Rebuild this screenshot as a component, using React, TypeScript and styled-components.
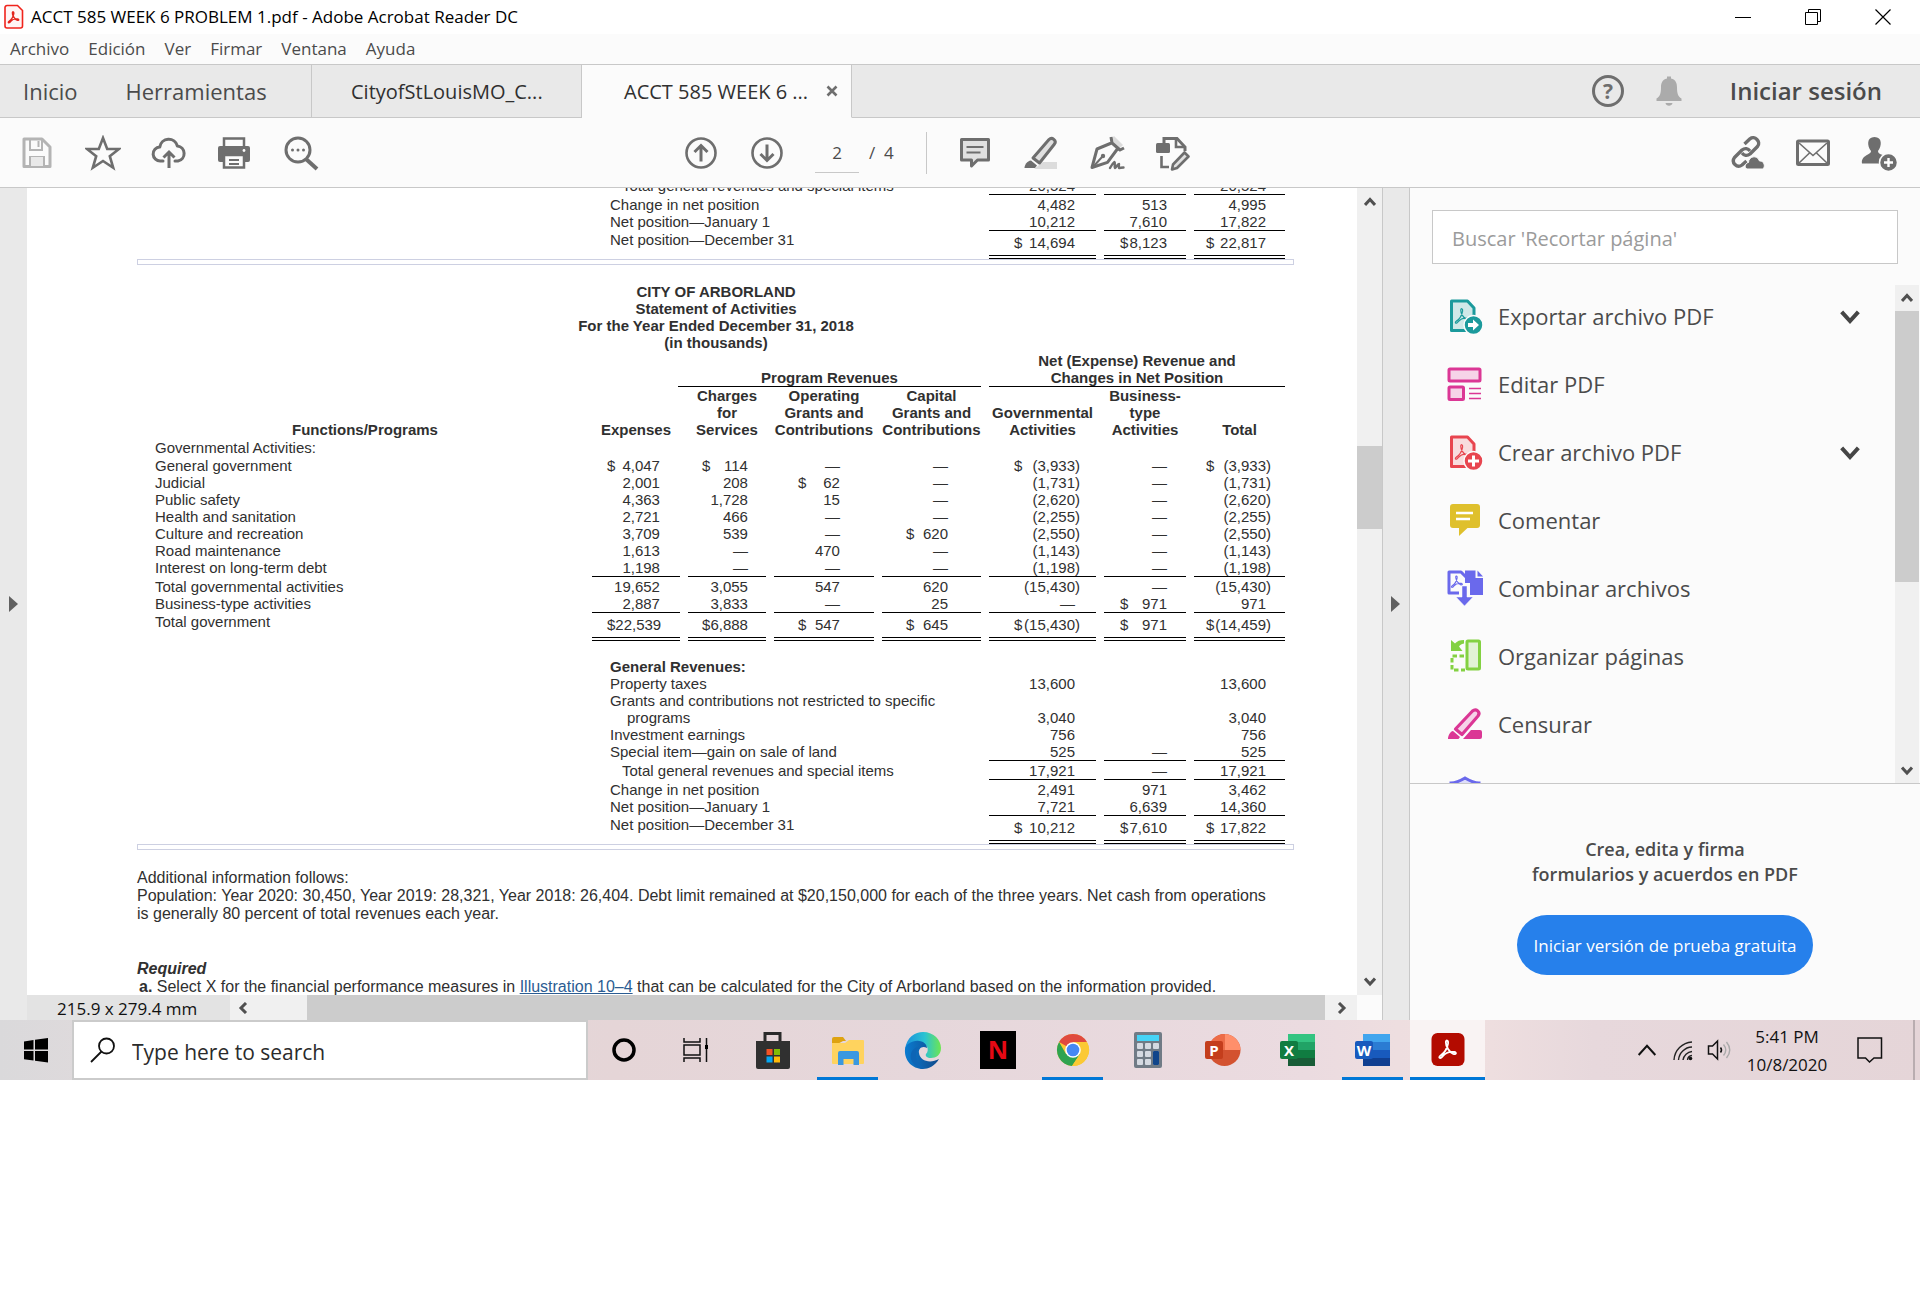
import React from "react";
import styled, { createGlobalStyle, css } from "styled-components";

const ui = `"Open Sans", "Noto Sans", sans-serif`;
const doc = `"Liberation Sans", Arial, sans-serif`;
const c = {
  bar: "#e9e9e9",
  surface: "#fbfbfb",
  line: "#c8c8c8",
  track: "#f0f0f0",
  thumb: "#cccccc",
  icon: "#6e6e6e",
  text: "#4b4b4b",
  ink: "#303030",
  accent: "#0078d7",
};

const Global = createGlobalStyle`
  *, *::before, *::after { box-sizing: border-box; }
  body { margin: 0; background: #fff; font-family: ${ui}; color: ${c.text}; }
  button, input { font: inherit; color: inherit; }
  button { border: 0; padding: 0; background: none; cursor: pointer; }
  svg { display: block; flex: none; }
`;

/* ---------- window chrome ---------- */

const TitleBar = styled.header`
  display: flex;
  align-items: center;
  height: 34px;
  padding: 0 2px 0 4px;
  background: #fff;
  color: #000;
`;
const WindowTitle = styled.h1`
  flex: 1;
  margin: 0 0 0 7px;
  font-size: 17px;
  line-height: 34px;
  font-weight: 400;
`;
const WindowButton = styled.button`
  display: grid;
  place-items: center;
  width: 70px;
  height: 34px;
`;
const MenuBar = styled.nav`
  display: flex;
  gap: 19px;
  height: 31px;
  padding-left: 10px;
  background: ${c.surface};
  border-bottom: 1px solid ${c.line};
`;
const MenuItem = styled.button`
  font-size: 17px;
  line-height: 30px;
`;
const TabBar = styled.nav`
  display: flex;
  height: 53px;
  background: ${c.bar};
`;
const HomeTabs = styled.div`
  display: flex;
  gap: 48px;
  width: 312px;
  padding-left: 23px;
  border-right: 1px solid ${c.line};
  border-bottom: 1px solid ${c.line};
`;
const HomeTab = styled.button`
  font-size: 22px;
`;
const FileTab = styled.div<{ $active?: boolean }>`
  display: flex;
  align-items: center;
  width: 270px;
  padding-left: ${(p) => (p.$active ? 42 : 39)}px;
  color: ${c.ink};
  background: ${(p) => (p.$active ? c.surface : "transparent")};
  border-right: 1px solid ${c.line};
  border-bottom: 1px solid ${(p) => (p.$active ? c.surface : c.line)};
`;
const FileTabLabel = styled.button`
  font-size: 20px;
  white-space: nowrap;
`;
const FileTabClose = styled.button`
  margin-left: auto;
  margin-right: 13px;
`;
const Account = styled.div`
  display: flex;
  flex: 1;
  align-items: center;
  justify-content: flex-end;
  gap: 32px;
  padding-right: 38px;
  border-bottom: 1px solid ${c.line};
`;
const SignIn = styled.button`
  margin-left: 16px;
  font-size: 24px;
  line-height: 32px;
  font-weight: 600;
`;

/* ---------- toolbar ---------- */

const ToolBar = styled.div`
  display: flex;
  align-items: center;
  height: 70px;
  padding: 0 8px 0 4px;
  background: ${c.surface};
  border-bottom: 1px solid ${c.line};
`;
const ToolGroup = styled.div<{ $side?: "left" | "right" }>`
  display: flex;
  align-items: center;
  ${(p) => p.$side && css`flex: 1 0 0;`}
  ${(p) => p.$side === "right" && css`justify-content: flex-end;`}
  ${(p) => !p.$side && css`margin-right: 42px;`}
`;
const ToolButton = styled.button`
  display: grid;
  place-items: center;
  width: 66px;
  height: 50px;
`;
const PageField = styled.input`
  width: 44px;
  height: 40px;
  margin-left: 15px;
  padding: 0;
  border: 0;
  border-bottom: 1px solid ${c.line};
  background: transparent;
  text-align: center;
  font-size: 17px;
`;
const PageCount = styled.span`
  width: 57px;
  margin-left: 10px;
  font-size: 17px;
  white-space: pre;
`;
const ToolDivider = styled.span`
  width: 1px;
  height: 42px;
  margin-right: 15px;
  background: ${c.line};
`;

/* ---------- workspace ---------- */

const Workspace = styled.main`
  display: flex;
  height: 832px;
`;
const Strip = styled.button`
  width: 27px;
  display: grid;
  place-items: center;
  background: ${c.bar};
`;
const RightStrip = styled(Strip)`
  width: 28px;
  border-left: 1px solid ${c.line};
  border-right: 1px solid ${c.line};
`;
const DocColumn = styled.section`
  flex: 1;
  min-width: 0;
  display: flex;
  flex-direction: column;
`;
const Viewport = styled.div`
  flex: 1;
  min-height: 0;
  overflow: hidden;
  background: #fff;
`;
const Sheet = styled.article`
  margin-top: -12px;
  padding: 0 63px 0 110px;
  font-family: ${doc};
  color: ${c.ink};
`;
const BottomBar = styled.div`
  display: flex;
  height: 25px;
  background: ${c.track};
`;
const PageSize = styled.span`
  width: 203px;
  padding-left: 30px;
  background: #e3e3e3;
  color: #111;
  font-size: 17px;
  line-height: 27px;
`;
const Scroll = styled.div<{ $vertical?: boolean; $size: number }>`
  display: flex;
  flex-direction: ${(p) => (p.$vertical ? "column" : "row")};
  ${(p) => (p.$vertical ? css`width: ${p.$size}px;` : css`flex: 1;`)}
  background: ${c.track};
`;
const ScrollArrow = styled.button<{ $length: number; $vertical?: boolean }>`
  display: grid;
  place-items: center;
  flex: 0 0 ${(p) => p.$length}px;
`;
const Track = styled.span<{ $grow: number }>`
  flex: ${(p) => p.$grow} 0 0;
`;
const Thumb = styled(Track)`
  background: ${c.thumb};
`;
const Corner = styled.div`
  height: 25px;
  background: ${c.surface};
`;

/* ---------- document ---------- */

const Statement = styled.table`
  width: calc(100% - 11px);
  margin-left: 10px;
  margin-right: 1px;
  table-layout: fixed;
  border-collapse: separate;
  border-spacing: 8px 0;
  font-size: 15px;
  line-height: 17px;
`;
const Caption = styled.caption`
  padding: 0 8px 1px 0;
  font-weight: 700;
`;
const Head = styled.th`
  padding: 0 0 1px;
  vertical-align: bottom;
  white-space: nowrap;
  &:first-child { padding-right: 9px; }
`;
const SpanHead = styled.th`
  padding: 0;
  vertical-align: bottom;
`;
const SpanRule = styled.div<{ $overhang?: boolean }>`
  border-bottom: 1px solid #000;
  margin-left: ${(p) => (p.$overhang ? -10 : 0)}px;
`;
const Label = styled.td<{ $indent?: number; $lead?: boolean; $tall?: boolean; $bold?: boolean }>`
  padding: ${(p) => (p.$lead ? 1 : 0)}px 0 ${(p) => (p.$tall ? 1 : 0)}px ${(p) => p.$indent ?? 0}px;
  vertical-align: top;
  font-weight: ${(p) => (p.$bold ? 700 : 400)};
`;
const AmountCell = styled.td<{ $lead?: boolean; $rule?: Rule }>`
  padding: ${(p) => (p.$lead ? 1 : 0)}px 0 0;
  vertical-align: top;
  ${(p) => p.$rule === "single" && css`border-bottom: 1px solid #000;`}
  ${(p) =>
    p.$rule === "double" &&
    css`
      padding-top: 3px;
      &::after {
        content: "";
        display: block;
        height: 4px;
        margin-top: 4px;
        border: solid #000;
        border-width: 1px 0;
      }
    `}
`;
const Amount = styled.div<{ $left: number; $right: number }>`
  display: flex;
  justify-content: space-between;
  height: 17px;
  padding: 0 ${(p) => p.$right}px 0 ${(p) => p.$left}px;
  white-space: nowrap;
`;
const Gap = styled.td`
  height: 17px;
  padding: 0;
`;
const Divider = styled.div`
  height: 6px;
  margin-bottom: 18px;
  border: 1px solid #cdd0e2;
`;
const Notes = styled.p`
  margin: 0 0 37px;
  padding-top: 1px;
  font-size: 16px;
  line-height: 18px;
`;
const Required = styled.h2`
  margin: 0;
  font-size: 16px;
  line-height: 18px;
  font-style: italic;
`;
const Task = styled.p`
  margin: 0;
  padding-left: 2px;
  font-size: 16px;
  line-height: 18px;
  a { color: #2b5c92; }
`;

type Rule = "single" | "double";
const columns = [
  { width: 88, left: 15, right: 20, hang: 0 },
  { width: 78, left: 14, right: 18, hang: 0 },
  { width: 100, left: 24, right: 34, hang: 0 },
  { width: 99, left: 24, right: 33, hang: 0 },
  { width: 107, left: 25, right: 21, hang: 5 },
  { width: 82, left: 16, right: 19, hang: 0 },
  { width: 91, left: 12, right: 19, hang: 5 },
];

interface Line {
  label: string;
  values: string[];
  indent?: number;
  lead?: boolean;
  tall?: boolean;
  bold?: boolean;
  rule?: Rule;
}

const programs: Line[] = [
  { label: "Governmental Activities:", values: ["", "", "", "", "", "", ""], tall: true },
  { label: "General government", values: ["$4,047", "$114", "—", "—", "$(3,933)", "—", "$(3,933)"] },
  { label: "Judicial", values: ["2,001", "208", "$62", "—", "(1,731)", "—", "(1,731)"] },
  { label: "Public safety", values: ["4,363", "1,728", "15", "—", "(2,620)", "—", "(2,620)"] },
  { label: "Health and sanitation", values: ["2,721", "466", "—", "—", "(2,255)", "—", "(2,255)"] },
  { label: "Culture and recreation", values: ["3,709", "539", "—", "$620", "(2,550)", "—", "(2,550)"] },
  { label: "Road maintenance", values: ["1,613", "—", "470", "—", "(1,143)", "—", "(1,143)"] },
  { label: "Interest on long-term debt", values: ["1,198", "—", "—", "—", "(1,198)", "—", "(1,198)"], rule: "single" },
  { label: "Total governmental activities", values: ["19,652", "3,055", "547", "620", "(15,430)", "—", "(15,430)"], lead: true },
  { label: "Business-type activities", values: ["2,887", "3,833", "—", "25", "—", "$971", "971"], rule: "single" },
  { label: "Total government", values: ["$22,539", "$6,888", "$547", "$645", "$(15,430)", "$971", "$(14,459)"], rule: "double" },
];
const revenues: Line[] = [
  { label: "General Revenues:", values: ["", "", ""], bold: true },
  { label: "Property taxes", values: ["13,600", "", "13,600"] },
  { label: "Grants and contributions not restricted to specific", values: ["", "", ""] },
  { label: "programs", values: ["3,040", "", "3,040"], indent: 17 },
  { label: "Investment earnings", values: ["756", "", "756"] },
  { label: "Special item—gain on sale of land", values: ["525", "—", "525"], rule: "single" },
  { label: "Total general revenues and special items", values: ["17,921", "—", "17,921"], indent: 12, lead: true, rule: "single" },
  { label: "Change in net position", values: ["2,491", "971", "3,462"], lead: true },
  { label: "Net position—January 1", values: ["7,721", "6,639", "14,360"], rule: "single" },
  { label: "Net position—December 31", values: ["$10,212", "$7,610", "$17,822"], rule: "double" },
];
const priorClosing: Line[] = [
  { label: "Total general revenues and special items", values: ["20,524", "—", "20,524"], indent: 12, lead: true, rule: "single" },
  { label: "Change in net position", values: ["4,482", "513", "4,995"], lead: true },
  { label: "Net position—January 1", values: ["10,212", "7,610", "17,822"], rule: "single" },
  { label: "Net position—December 31", values: ["$14,694", "$8,123", "$22,817"], rule: "double" },
];

const Cols = () => (
  <colgroup>
    <col />
    {columns.map((col, i) => (
      <col key={i} style={{ width: col.width }} />
    ))}
  </colgroup>
);

function Values({ line, from }: { line: Line; from: number }) {
  return (
    <>
      {line.values.map((value, i) => {
        const col = columns[from + i];
        const dollar = value.startsWith("$");
        const right = col.right - (value.includes("(") ? col.hang : 0);
        return (
          <AmountCell key={i} $lead={line.lead} $rule={line.rule}>
            <Amount $left={col.left} $right={right}>
              <span>{dollar ? "$" : ""}</span>
              <span>{dollar ? value.slice(1) : value}</span>
            </Amount>
          </AmountCell>
        );
      })}
    </>
  );
}

const RevenueRow = ({ line }: { line: Line }) => (
  <tr>
    <td />
    <Label colSpan={4} $indent={18 + (line.indent ?? 0)} $lead={line.lead} $bold={line.bold}>
      {line.label}
    </Label>
    <Values line={line} from={4} />
  </tr>
);

/* ---------- tools panel ---------- */

const Panel = styled.aside`
  display: flex;
  flex-direction: column;
  width: 510px;
  background: ${c.surface};
`;
const Search = styled.input`
  height: 54px;
  margin: 22px 22px 21px;
  padding: 2px 19px 0;
  border: 1px solid ${c.line};
  background: #fff;
  font-size: 20px;
  &::placeholder { color: #9b9b9b; opacity: 1; }
`;
const ToolsArea = styled.div`
  display: flex;
  flex: 1;
  min-height: 0;
  padding: 0 1px 0 22px;
  border-bottom: 1px solid ${c.line};
`;
const ToolList = styled.ul`
  display: flex;
  flex: 1;
  flex-direction: column;
  gap: 6px;
  overflow: hidden;
  margin: 0 23px 0 0;
  padding: 0;
  list-style: none;
`;
const Tool = styled.button`
  display: flex;
  align-items: center;
  width: 100%;
  height: 62px;
  padding: 0 12px 0 15px;
  text-align: left;
  font-size: 22px;
`;
const ToolName = styled.span`
  flex: 1;
  margin-left: 15px;
`;
const Promo = styled.div`
  display: flex;
  flex-direction: column;
  align-items: center;
  height: 236px;
  padding-top: 53px;
`;
const PromoText = styled.p`
  margin: 0 0 28px;
  font-size: 18px;
  line-height: 25px;
  font-weight: 600;
  text-align: center;
`;
const PromoButton = styled.button`
  height: 60px;
  padding: 0 16px;
  border-radius: 30px;
  background: #2680eb;
  color: #fff;
  font-size: 17px;
`;

/* ---------- taskbar ---------- */

const TaskBar = styled.footer`
  display: flex;
  height: 60px;
  color: #111;
  background: linear-gradient(90deg, #dad9db 0, #dfdadc 5%, #e5d5d7 32%, #e6d7db 48%, #ebdbe0 68%, #f0e0e0 76%, #e7d8dc 83%, #e5d5d8 100%);
`;
const TaskButton = styled.button<{ $width: number }>`
  display: grid;
  place-items: center;
  width: ${(p) => p.$width}px;
`;
const TaskSearch = styled.label`
  display: flex;
  align-items: center;
  width: 516px;
  padding-left: 16px;
  border: 2px solid #cbcbcb;
  background: #fff;
`;
const TaskSearchField = styled.input`
  flex: 1;
  min-width: 0;
  margin-left: 16px;
  padding: 3px 0 0;
  border: 0;
  background: none;
  font-size: 21px;
  &::placeholder { color: #2b2b2b; opacity: 1; }
`;
const Apps = styled.div`
  display: flex;
  margin-left: 3px;
`;
const AppButton = styled.button<{ $state?: "open" | "active" }>`
  display: flex;
  flex-direction: column;
  align-items: center;
  justify-content: space-between;
  width: 75px;
  padding-top: 11px;
  ${(p) => p.$state === "active" && css`background: #f9f3f3;`}
  &::after {
    content: "";
    width: ${(p) => (p.$state === "active" ? "100%" : "61px")};
    height: 3px;
    background: ${(p) => (p.$state ? c.accent : "transparent")};
  }
`;
const Tray = styled.div`
  display: flex;
  margin-left: auto;
`;
const Clock = styled.time`
  width: 100px;
  padding-top: 3px;
  font-size: 17px;
  line-height: 28px;
  text-align: center;
`;
const ShowDesktop = styled.button`
  width: 7px;
  margin-left: 10px;
  border-left: 2px solid #b9adb0;
`;

/* ---------- icons ---------- */

const trefoil =
  "M6 19c-1.6.5-2.1-1 0-2.3 4-2.5 5.5-6.5 6.2-10.2.4-3-1.8-3.4-1.9-1-.1 3.5 3 8.5 6.5 10 2.5 1 3.2-1.2.8-1.6-3.4-.5-7.6.6-10 3.6-.6.8-1 1.3-1.6 1.5z";

const Svg = ({ size = 36, h, children, box }: { size?: number; h?: number; box?: string; children: React.ReactNode }) => (
  <svg width={size} height={h ?? size} viewBox={box ?? `0 0 ${size} ${h ?? size}`} fill="none" aria-hidden="true">
    {children}
  </svg>
);
const Chevron = ({ dir, size = 12, w = 3, color = "#505050" }: { dir: "up" | "down" | "left" | "right"; size?: number; w?: number; color?: string }) => {
  const d = { up: "M1 9 6 3.5 11 9", down: "M1 3.5 6 9 11 3.5", left: "M9 1 4 6 9 11", right: "M4 1 9 6 4 11" }[dir];
  return (
    <Svg size={size} box="0 0 12 12">
      <path d={d} stroke={color} strokeWidth={(w * 12) / size} />
    </Svg>
  );
};
const Triangle = () => (
  <Svg size={10} h={18}>
    <path d="M0 1v16l9-8z" fill="#606060" />
  </Svg>
);

const g = { stroke: c.icon, strokeWidth: 3, strokeLinejoin: "round" as const, strokeLinecap: "round" as const };

const SaveIcon = () => (
  <Svg>
    <path d="M5 4h18l8 8v19.500H5z" stroke="#b4b4b4" strokeWidth="3" strokeLinejoin="round" />
    <path d="M11 4v11h12V4M11 31v-9h14v9" stroke="#b4b4b4" strokeWidth="2" />
    <path d="M12 22h12v9H12z" fill="#e9e9e9" />
    <path d="M19.500 6v6" stroke="#b4b4b4" strokeWidth="2" />
  </Svg>
);
const StarIcon = () => (
  <Svg>
    <path d="m18 3 4.200 11H34l-9.200 7.200 3.400 11.600L18 26l-10.200 6.800 3.400-11.600L2 14h11.800z" stroke={c.icon} strokeWidth="2.600" />
  </Svg>
);
const CloudIcon = () => (
  <Svg>
    <path d="M12 26H9.500a7 7 0 0 1-.7-14A9 9 0 0 1 26.400 11a7.600 7.600 0 0 1 .6 15H24" {...g} />
    <path d="M18 33V17M12.500 22.500 18 17l5.500 5.500" {...g} strokeLinecap="butt" strokeLinejoin="miter" />
  </Svg>
);
const PrintIcon = () => (
  <Svg>
    <path d="M7 12V3.500h20V12" stroke={c.icon} strokeWidth="2.500" />
    <path d="M1 13a2 2 0 0 1 2-2h28a2 2 0 0 1 2 2v12a2 2 0 0 1-2 2H3a2 2 0 0 1-2-2z" fill={c.icon} />
    <path d="M7 20h20v12.500H7z" fill="#fbfbfb" stroke={c.icon} strokeWidth="2.500" />
    <path d="M12 25h10M12 29h10" stroke={c.icon} strokeWidth="1.800" />
    <circle cx="27" cy="15.500" r="1.400" fill="#fbfbfb" />
  </Svg>
);
const ZoomIcon = () => (
  <Svg>
    <circle cx="15" cy="15" r="12" stroke={c.icon} strokeWidth="3" />
    <path d="m23 24 11 10" stroke={c.icon} strokeWidth="4" />
    <circle cx="9.500" cy="15" r="1.500" fill={c.icon} />
    <circle cx="15" cy="15" r="1.500" fill={c.icon} />
    <circle cx="20.500" cy="15" r="1.500" fill={c.icon} />
  </Svg>
);
const ArrowCircle = ({ down }: { down?: boolean }) => (
  <Svg>
    <circle cx="18" cy="18" r="14.500" stroke={c.icon} strokeWidth="2.600" />
    <path d={down ? "M18 9.500v16M11.500 19l6.500 6.500 6.500-6.500" : "M18 26.500v-16M11.500 17l6.500-6.500 6.500 6.500"} stroke={c.icon} strokeWidth="3" />
  </Svg>
);
const CommentIcon = () => (
  <Svg>
    <path d="M4.500 4.500h27v20.500H20.500L14.500 31v-6h-10z" fill="#e0e0e0" stroke={c.icon} strokeWidth="3" strokeLinejoin="round" />
    <path d="M9.500 12h17M9.500 17.500h14" stroke={c.icon} strokeWidth="1.800" />
  </Svg>
);
const HighlightIcon = () => (
  <Svg>
    <path d="M11 34 20 27h14v7z" fill="#dcdcdc" />
    <path d="M10 23 26 4.500c3-3 8 1 5.500 4.500L16.500 28z" fill="#e0e0e0" stroke={c.icon} strokeWidth="3" strokeLinejoin="round" />
    <path d="m8 25.500 6 5-2 2.500H1.500c0-3 2.500-7 6.500-7.500z" fill={c.icon} />
  </Svg>
);
const PenIcon = () => (
  <Svg>
    <path d="m21 5 4-4 9 9-4.500 4.500z" fill="#dcdcdc" />
    <path d="m22 2 1 6 8 7 4-2M22.500 8 8 14 3 32.500l15.500-5.200L28 14.500" stroke={c.icon} strokeWidth="3" strokeLinejoin="round" />
    <path d="m4 32 9-10" stroke={c.icon} strokeWidth="2" />
    <circle cx="14" cy="21" r="2.200" fill={c.icon} />
    <path d="M21 33c1-2 3-5 4.500-6 1 1-.5 4 .5 6 1.500-1 2.500-4 4-4 0 1-.5 3 0 4 1.500 0 2-.5 4.500-.5" {...g} strokeWidth="2.400" />
  </Svg>
);
const StampIcon = () => (
  <Svg>
    <path d="M9 8V3.500h13l8 8.500v4" stroke={c.icon} strokeWidth="3" />
    <rect x="1" y="8" width="14" height="10" rx="1.500" fill={c.icon} />
    <path d="M21 4v8h8M6.500 21v11H14" stroke={c.icon} strokeWidth="2.600" />
    <path d="M18 29.500 29.500 17.500l4 4L22 33l-5 1.500z" fill="#e0e0e0" stroke={c.icon} strokeWidth="2.600" strokeLinejoin="round" />
  </Svg>
);
const LinkIcon = () => (
  <Svg>
    <g {...g} strokeWidth="3.400" strokeLinecap="butt">
      <path d="m15.500 9 5.500-5.200c4.500-3.600 11.500 2.700 7.500 7.700l-7.500 7.500c-3 2.400-6 1.500-8-1" />
      <path d="m17.500 26-4.500 4c-5 3.800-11.200-2.500-7.500-7.500l7.500-7.500c3-2.400 6-1.500 8 1" />
    </g>
    <path d="M18 34c-3-1-2-6 1.500-6.500 0-6 8.500-8.500 11-1.500 5-.5 6 6 3.500 8z" fill={c.icon} stroke="#fbfbfb" strokeWidth="1" />
  </Svg>
);
const MailIcon = () => (
  <Svg>
    <rect x="2.500" y="6" width="31" height="23.500" rx="1" stroke={c.icon} strokeWidth="3" />
    <path d="M4 8 18 20.500 32 8M4 28l10.500-10M32 28 21.500 18" stroke={c.icon} strokeWidth="1.600" />
  </Svg>
);
const UserIcon = () => (
  <Svg>
    <path d="M13.500 2c8 0 7.500 9 3.500 14 0 4 6 3.500 9 6-3 1-6 3-6 6.500H1c-1-9 9-8 9-12.500C6 11 5.500 2 13.500 2z" fill={c.icon} />
    <circle cx="27.500" cy="27.500" r="9" fill={c.icon} stroke="#fbfbfb" strokeWidth="1.500" />
    <path d="M27.500 23v9M23 27.500h9" stroke="#fff" strokeWidth="2.400" />
  </Svg>
);
const HelpIcon = () => (
  <Svg size={32}>
    <circle cx="16" cy="16" r="14.500" stroke={c.icon} strokeWidth="3" />
    <text x="16" y="23.500" textAnchor="middle" fontFamily="Open Sans" fontWeight="700" fontSize="21" fill={c.icon}>?</text>
  </Svg>
);
const BellIcon = () => (
  <Svg size={26} h={32}>
    <path d="M11 3.500V1.500h4v2c5 1 6 5 6 9 0 6 1 9 4.500 11V26H.5v-2.500C4 21.500 5 18.500 5 12.500c0-4 1-8 6-9zM9.500 28h7c-.5 3.500-6.500 3.500-7 0z" fill="#ababab" />
  </Svg>
);

const FileBase = ({ color, fill }: { color: string; fill: string }) => (
  <>
    <path d="M4.500 3h16l6.500 7v22.500H4.500z" fill={fill} stroke={color} strokeWidth="3" strokeLinejoin="round" />
    <g transform="translate(4 7) scale(.95)">
      <path d={trefoil} stroke={color} strokeWidth="1.300" />
    </g>
  </>
);
const ExportIcon = () => (
  <Svg>
    <FileBase color="#1b9a9c" fill="#d0e8e8" />
    <circle cx="26.500" cy="27" r="9.500" fill="#1b9a9c" stroke="#fbfbfb" strokeWidth="1.500" />
    <path d="M21 25h5v-3.500l6 5.500-6 5.500V29h-5z" fill="#fff" />
  </Svg>
);
const CreateIcon = () => (
  <Svg>
    <FileBase color="#e8454f" fill="#f8dcde" />
    <circle cx="26.500" cy="27" r="9.500" fill="#e8454f" stroke="#fbfbfb" strokeWidth="1.500" />
    <path d="M26.500 21.500v11M21 27h11" stroke="#fff" strokeWidth="3" />
  </Svg>
);
const EditIcon = () => (
  <Svg>
    <g stroke="#db3795" strokeWidth="3" fill="#f6d3e8">
      <rect x="2" y="3" width="31" height="12" rx="1" />
      <rect x="2" y="21" width="14.500" height="12.500" rx="1" />
    </g>
    <path d="M22 22.500h12M22 27.500h12M22 32.500h12" stroke="#db3795" strokeWidth="1.600" />
  </Svg>
);
const NoteIcon = () => (
  <Svg>
    <path d="M6 2h24a3 3 0 0 1 3 3v18a3 3 0 0 1-3 3H20.500L12 34v-8H6a3 3 0 0 1-3-3V5a3 3 0 0 1 3-3z" fill="#dfc02c" />
    <path d="M9 11h17M9 17h14" stroke="#fff" strokeWidth="2.400" />
  </Svg>
);
const CombineIcon = () => (
  <Svg>
    <path d="M12 23H2V2h12l5 5" stroke="#6a69ec" strokeWidth="3" strokeLinejoin="round" />
    <path d="M18 .5h10.500V8H36v17H23V13h-5z" fill="#6a69ec" />
    <path d="M30.500.5 36 6.500h-5.500z" fill="#6a69ec" />
    <g transform="translate(1 3) scale(.75)"><path d={trefoil} stroke="#6a69ec" strokeWidth="1.500" /></g>
    <path d="M15 16h5v11h6L17.500 36 9 27h6z" fill="#6a69ec" stroke="#fbfbfb" strokeWidth=".5" />
  </Svg>
);
const OrganizeIcon = () => (
  <Svg>
    <rect x="20" y="3" width="12.500" height="28" rx="1" fill="#e2f2d5" stroke="#83d142" strokeWidth="3" />
    <path d="M17 18H5v14h13" stroke="#83d142" strokeWidth="3" strokeDasharray="4.500 2.500" />
    <path d="M17 2v3.500c-3 .5-4 1.500-5 3L15.500 13H4V2l4 3.500C10 3 13 2 17 2z" fill="#83d142" />
  </Svg>
);
const RedactIcon = () => (
  <Svg>
    <path d="M8.500 23 25.500 5c3.500-3 8.500 1 5.500 5L15 28.500z" fill="#f6d3e8" stroke="#db3795" strokeWidth="3.200" strokeLinejoin="round" />
    <path d="m6 25 7 6-1.500 2H1c0-3 2-7.500 5-8zM16 33l8-9h9a2 2 0 0 1 2 2v5a2 2 0 0 1-2 2z" fill="#db3795" />
  </Svg>
);
const ShieldIcon = () => (
  <Svg>
    <path d="M4 9c5 0 9-2 14-5 5 3 9 5 14 5v9c0 8-8 12-14 15C12 30 4 26 4 18z" fill="#dedefa" stroke="#6a69ec" strokeWidth="3" />
  </Svg>
);

const StartIcon = () => (
  <Svg size={26}>
    <path d="M1 4.500 10.500 3v9.500H1zM12 2.800 25 1v11.500H12zM1 14h9.500v9.500L1 22.200zM12 14h13v11.500l-13-1.800z" fill="#000" />
  </Svg>
);
const LensIcon = () => (
  <Svg size={26}>
    <circle cx="16.500" cy="9" r="7.500" stroke="#111" strokeWidth="1.800" />
    <path d="M11.500 14.500 1 25" stroke="#111" strokeWidth="1.800" />
  </Svg>
);
const CortanaIcon = () => (
  <Svg size={26}>
    <circle cx="13" cy="13" r="10" stroke="#000" strokeWidth="3.500" />
  </Svg>
);
const TaskViewIcon = () => (
  <Svg size={28} h={26}>
    <path d="M2 1v4h16V1M2 25v-4h16v4M2 8h16v10H2zM24.500 1v24" stroke="#111" strokeWidth="1.500" />
    <path d="M23 8h3v4h-3z" fill="#000" />
  </Svg>
);
const StoreIcon = () => (
  <Svg size={38}>
    <path d="M11 11V2.500h15V11" stroke="#2a2a2a" strokeWidth="3" />
    <path d="M2 10h34v26a2 2 0 0 1-2 2H4a2 2 0 0 1-2-2z" fill="#303030" />
    <path d="M12.500 18h6v6h-6z" fill="#f35325" /><path d="M20 18h6v6h-6z" fill="#81bc06" />
    <path d="M12.500 25.500h6v6h-6z" fill="#05a6f0" /><path d="M20 25.500h6v6h-6z" fill="#ffba08" />
  </Svg>
);
const FolderIcon = () => (
  <Svg size={38}>
    <path d="M3 8a2 2 0 0 1 2-2h9l3 4h-3L3 16z" fill="#dea311" />
    <path d="M3 12h13l4-3h14a1 1 0 0 1 1 1v22a1 1 0 0 1-1 1H4a1 1 0 0 1-1-1z" fill="#ffd35e" />
    <path d="M9 22a2 2 0 0 1 2-2h17a2 2 0 0 1 2 2v12h-5.500v-6h-10v6H9z" fill="#3a98e0" />
  </Svg>
);
const EdgeIcon = () => (
  <Svg size={38}>
    <defs>
      <linearGradient id="edgeTop" x1="0" x2="1"><stop offset="0" stopColor="#1a8fdc" /><stop offset=".55" stopColor="#2bc3d2" /><stop offset="1" stopColor="#6ee650" /></linearGradient>
      <linearGradient id="edgeLow" x1="0" x2="1"><stop offset="0" stopColor="#0a7bd0" /><stop offset="1" stopColor="#114a8b" /></linearGradient>
    </defs>
    <path d="M1 18C3 6 11 1 19 1c11 0 18 8 18 16 0 7-5 10-10 10-4 0-6-2-5-4 4-4 1-11-6-11-6 0-12 3-15 6z" fill="url(#edgeTop)" />
    <path d="M1 18c1-5 8-9 14-8 5 0 8 4 8 7-5-3-9 1-8 5 1 8 11 11 20 6-4 7-11 10-16 10C8 38 0 29 1 18z" fill="url(#edgeLow)" />
    <path d="M15 16c-6 6-3 17 6 21-9 1-16-7-14-14 1-4 4-7 8-7z" fill="#0d65b5" />
  </Svg>
);
const NetflixIcon = () => (
  <Svg size={36} h={38}>
    <path d="M0 0h36v38H0z" fill="#000" />
    <text x="18" y="28" textAnchor="middle" fontFamily="Open Sans" fontWeight="700" fontSize="25" fill="#e50914">N</text>
  </Svg>
);
const ChromeIcon = () => (
  <Svg size={34} h={38}>
    <circle cx="17" cy="19" r="16" fill="#fbc934" />
    <path d="M17 19 3.100 11A16 16 0 0 1 30.900 11L17 11z" fill="#e04a3f" />
    <path d="M3.100 11A16 16 0 0 0 16 35l8-12-14 0z" fill="#2fa350" />
    <path d="M30.900 11H17l7 12-8 12A16 16 0 0 0 30.900 11z" fill="#fbc934" />
    <circle cx="17" cy="19" r="7.800" fill="#fff" /><circle cx="17" cy="19" r="6.300" fill="#4688f4" />
  </Svg>
);
const CalcIcon = () => (
  <Svg size={30} h={38}>
    <rect x="1" y="1" width="28" height="36" rx="2" fill="#707b86" />
    <path d="M4 4h22v6H4z" fill="#46d4f7" />
    {[13, 21, 29].map((y) => [4, 12, 20].map((x) => <rect key={`${x}-${y}`} x={x} y={y - 1} width="6" height="6" rx="1" fill="#d5dae2" />))}
    <rect x="20" y="20" width="6" height="14" rx="1" fill="#10458b" />
  </Svg>
);
const OfficeIcon = ({ letter, colors }: { letter: string; colors: string[] }) => (
  <Svg size={38}>
    {letter === "P" ? (
      <>
        <circle cx="20.500" cy="19" r="16" fill={colors[3]} />
        <path d="M20.500 3a16 16 0 0 1 16 16h-16z" fill={colors[2]} />
        <path d="M20.500 3v16h-16a16 16 0 0 1 16-16z" fill={colors[1]} />
      </>
    ) : (
      [0, 1, 2, 3].map((i) => <path key={i} d={`M9 ${3 + i * 8}h27v8H9z`} fill={colors[i + 1]} />)
    )}
    <rect x="1" y="10" width="18" height="18" rx="2" fill={colors[0]} />
    <text x="10" y="24.500" textAnchor="middle" fontFamily="Open Sans" fontWeight="700" fontSize="15" fill="#fff">{letter}</text>
  </Svg>
);
const AcrobatIcon = () => (
  <Svg size={38}>
    <rect x="2.500" y="2" width="33" height="33" rx="6" fill="#b30b00" />
    <g transform="translate(5 5) scale(1.150)"><path d={trefoil} stroke="#fff" strokeWidth="1.600" /></g>
  </Svg>
);
const WifiIcon = () => (
  <Svg size={22}>
    <path d="M2 21A19 19 0 0 1 20 3M6.500 21A14 14 0 0 1 20 8M11 21a10 10 0 0 1 9-8.500M15.500 21a5 5 0 0 1 4.500-4.500" stroke="#222" strokeWidth="1.400" />
    <circle cx="18.500" cy="19.500" r="1.800" fill="#111" />
  </Svg>
);
const SpeakerIcon = () => (
  <Svg size={24} h={22}>
    <path d="M1.500 7h4l5-5v18l-5-5h-4z" stroke="#111" strokeWidth="1.500" />
    <path d="M13.500 8.500q2 2.500 0 5" stroke="#111" strokeWidth="1.500" />
    <path d="M16.500 5.500q4.500 5.500 0 11M19.500 3q6.500 8 0 16" stroke="#aaa" strokeWidth="1.400" />
  </Svg>
);
const NoticeIcon = () => (
  <Svg size={26}>
    <path d="M1 1h23.500v20H17l-4.500 4L8.500 21H1z" stroke="#111" strokeWidth="1.500" />
  </Svg>
);
const TitleIcon = () => (
  <Svg size={20} h={26}>
    <path d="M3 1.500h10.500l5 5V22a2 2 0 0 1-2 2H3a2 2 0 0 1-2-2V3.500a2 2 0 0 1 2-2z" fill="#fff5f5" stroke="#f0241c" strokeWidth="1.600" />
    <g transform="translate(1 5) scale(.72)"><path d={trefoil} stroke="#e3241c" strokeWidth="2" /></g>
  </Svg>
);

const tools: [string, React.FC, boolean?][] = [
  ["Exportar archivo PDF", ExportIcon, true],
  ["Editar PDF", EditIcon],
  ["Crear archivo PDF", CreateIcon, true],
  ["Comentar", NoteIcon],
  ["Combinar archivos", CombineIcon],
  ["Organizar páginas", OrganizeIcon],
  ["Censurar", RedactIcon],
];

const apps: [string, React.ReactNode, ("open" | "active")?][] = [
  ["Microsoft Store", <StoreIcon />],
  ["File Explorer", <FolderIcon />, "open"],
  ["Microsoft Edge", <EdgeIcon />],
  ["Netflix", <NetflixIcon />],
  ["Google Chrome", <ChromeIcon />, "open"],
  ["Calculator", <CalcIcon />],
  ["PowerPoint", <OfficeIcon letter="P" colors={["#c43e1c", "#ed6c47", "#ff8f6b", "#d35230"]} />],
  ["Excel", <OfficeIcon letter="X" colors={["#107c41", "#33c481", "#21a366", "#107c41", "#185c37"]} />],
  ["Word", <OfficeIcon letter="W" colors={["#185abd", "#41a5ee", "#2b7cd3", "#185abd", "#103f91"]} />, "open"],
  ["Adobe Acrobat Reader", <AcrobatIcon />, "active"],
];

const leftTools: [string, React.FC][] = [["Guardar", SaveIcon], ["Destacar", StarIcon], ["Cargar", CloudIcon], ["Imprimir", PrintIcon], ["Buscar", ZoomIcon]];
const markTools: [string, React.FC][] = [["Nota", CommentIcon], ["Resaltar", HighlightIcon], ["Firmar documento", PenIcon], ["Sello", StampIcon]];
const shareTools: [string, React.FC][] = [["Compartir vínculo", LinkIcon], ["Correo", MailIcon], ["Invitar", UserIcon]];

const ToolButtons = ({ items }: { items: [string, React.FC][] }) => (
  <>
    {items.map(([name, Icon]) => (
      <ToolButton key={name} aria-label={name}><Icon /></ToolButton>
    ))}
  </>
);

export default function App() {
  return (
    <>
      <Global />
      <TitleBar>
        <TitleIcon />
        <WindowTitle>ACCT 585 WEEK 6 PROBLEM 1.pdf - Adobe Acrobat Reader DC</WindowTitle>
        <WindowButton aria-label="Minimizar"><Svg size={16}><path d="M0 8.500h16" stroke="#000" /></Svg></WindowButton>
        <WindowButton aria-label="Restaurar"><Svg size={16}><path d="M.5 3.500h12v12H.5zM3.500 3V.5h12v12H13" stroke="#000" /></Svg></WindowButton>
        <WindowButton aria-label="Cerrar"><Svg size={16}><path d="m.5.5 15 15M15.500.5l-15 15" stroke="#000" strokeWidth="1.200" /></Svg></WindowButton>
      </TitleBar>
      <MenuBar>
        {["Archivo", "Edición", "Ver", "Firmar", "Ventana", "Ayuda"].map((m) => <MenuItem key={m}>{m}</MenuItem>)}
      </MenuBar>
      <TabBar>
        <HomeTabs>
          <HomeTab>Inicio</HomeTab>
          <HomeTab>Herramientas</HomeTab>
        </HomeTabs>
        <FileTab><FileTabLabel>CityofStLouisMO_C...</FileTabLabel></FileTab>
        <FileTab $active>
          <FileTabLabel>ACCT 585 WEEK 6 ...</FileTabLabel>
          <FileTabClose aria-label="Cerrar pestaña">
            <Svg size={12}><path d="m1.500 1.500 9 9M10.500 1.500l-9 9" stroke={c.icon} strokeWidth="2.600" /></Svg>
          </FileTabClose>
        </FileTab>
        <Account>
          <button aria-label="Ayuda en línea"><HelpIcon /></button>
          <button aria-label="Notificaciones"><BellIcon /></button>
          <SignIn>Iniciar sesión</SignIn>
        </Account>
      </TabBar>
      <ToolBar>
        <ToolGroup $side="left"><ToolButtons items={leftTools} /></ToolGroup>
        <ToolGroup>
          <ToolButton aria-label="Página anterior"><ArrowCircle /></ToolButton>
          <ToolButton aria-label="Página siguiente"><ArrowCircle down /></ToolButton>
          <PageField aria-label="Página" defaultValue="2" />
          <PageCount>/  4</PageCount>
          <ToolDivider />
          <ToolButtons items={markTools} />
        </ToolGroup>
        <ToolGroup $side="right"><ToolButtons items={shareTools} /></ToolGroup>
      </ToolBar>

      <Workspace>
        <Strip aria-label="Mostrar panel de navegación"><Triangle /></Strip>
        <DocColumn>
          <Viewport>
            <Sheet>
              <Statement>
                <Cols />
                <tbody>{priorClosing.map((l) => <RevenueRow key={l.label} line={l} />)}</tbody>
              </Statement>
              <Divider />
              <Statement>
                <Caption>
                  CITY OF ARBORLAND<br />Statement of Activities<br />For the Year Ended December 31, 2018<br />(in thousands)
                </Caption>
                <Cols />
                <thead>
                  <tr>
                    <td /><td />
                    <SpanHead colSpan={3}><SpanRule $overhang>Program Revenues</SpanRule></SpanHead>
                    <SpanHead colSpan={3}><SpanRule>Net (Expense) Revenue and<br />Changes in Net Position</SpanRule></SpanHead>
                  </tr>
                  <tr>
                    <Head>Functions/Programs</Head>
                    <Head>Expenses</Head>
                    <Head>Charges<br />for<br />Services</Head>
                    <Head>Operating<br />Grants and<br />Contributions</Head>
                    <Head>Capital<br />Grants and<br />Contributions</Head>
                    <Head>Governmental<br />Activities</Head>
                    <Head>Business-<br />type<br />Activities</Head>
                    <Head>Total</Head>
                  </tr>
                </thead>
                <tbody>
                  {programs.map((l) => (
                    <tr key={l.label}>
                      <Label $lead={l.lead} $tall={l.tall}>{l.label}</Label>
                      <Values line={l} from={0} />
                    </tr>
                  ))}
                </tbody>
                <tbody>
                  <tr><Gap colSpan={8} /></tr>
                  {revenues.map((l) => <RevenueRow key={l.label} line={l} />)}
                </tbody>
              </Statement>
              <Divider />
              <Notes>
                Additional information follows:<br />
                Population: Year 2020: 30,450, Year 2019: 28,321, Year 2018: 26,404. Debt limit remained at $20,150,000 for each of the three years. Net cash from operations<br />
                is generally 80 percent of total revenues each year.
              </Notes>
              <Required>Required</Required>
              <Task>
                <b>a.</b> Select X for the financial performance measures in <a href="#illustration">Illustration 10–4</a> that can be calculated for the City of Arborland based on the information provided.
              </Task>
            </Sheet>
          </Viewport>
          <BottomBar>
            <PageSize>215.9 x 279.4 mm</PageSize>
            <Scroll $size={25}>
              <ScrollArrow $length={25} aria-label="Desplazar a la izquierda"><Chevron dir="left" /></ScrollArrow>
              <Track $grow={52} />
              <Thumb $grow={1018} />
              <ScrollArrow $length={32} aria-label="Desplazar a la derecha"><Chevron dir="right" /></ScrollArrow>
            </Scroll>
          </BottomBar>
        </DocColumn>
        <Scroll $vertical $size={25}>
          <ScrollArrow $length={28} aria-label="Desplazar arriba"><Chevron dir="up" /></ScrollArrow>
          <Track $grow={230} />
          <Thumb $grow={83} />
          <Track $grow={437} />
          <ScrollArrow $length={28} aria-label="Desplazar abajo"><Chevron dir="down" /></ScrollArrow>
          <Corner />
        </Scroll>
        <RightStrip aria-label="Ocultar panel de herramientas"><Triangle /></RightStrip>
        <Panel>
          <Search aria-label="Buscar herramientas" placeholder="Buscar 'Recortar página'" />
          <ToolsArea>
            <ToolList>
              {tools.map(([name, Icon, expandable]) => (
                <li key={name}>
                  <Tool>
                    <Icon />
                    <ToolName>{name}</ToolName>
                    {expandable && <Chevron dir="down" size={20} w={4} color="#454545" />}
                  </Tool>
                </li>
              ))}
              <li><Tool aria-label="Proteger"><ShieldIcon /></Tool></li>
            </ToolList>
            <Scroll $vertical $size={24}>
              <ScrollArrow $length={26} aria-label="Subir lista"><Chevron dir="up" /></ScrollArrow>
              <Thumb $grow={271} />
              <Track $grow={175} />
              <ScrollArrow $length={26} aria-label="Bajar lista"><Chevron dir="down" /></ScrollArrow>
            </Scroll>
          </ToolsArea>
          <Promo>
            <PromoText>Crea, edita y firma<br />formularios y acuerdos en PDF</PromoText>
            <PromoButton>Iniciar versión de prueba gratuita</PromoButton>
          </Promo>
        </Panel>
      </Workspace>

      <TaskBar>
        <TaskButton $width={72} aria-label="Start"><StartIcon /></TaskButton>
        <TaskSearch>
          <LensIcon />
          <TaskSearchField aria-label="Search" placeholder="Type here to search" />
        </TaskSearch>
        <TaskButton $width={72} aria-label="Cortana"><CortanaIcon /></TaskButton>
        <TaskButton $width={72} aria-label="Task View"><TaskViewIcon /></TaskButton>
        <Apps>
          {apps.map(([name, icon, state]) => (
            <AppButton key={name} aria-label={name} $state={state}>{icon}</AppButton>
          ))}
        </Apps>
        <Tray>
          <TaskButton $width={36} aria-label="Hidden icons"><Chevron dir="up" size={20} w={2} color="#111" /></TaskButton>
          <TaskButton $width={36} aria-label="Network"><WifiIcon /></TaskButton>
          <TaskButton $width={36} aria-label="Volume"><SpeakerIcon /></TaskButton>
          <Clock>5:41 PM<br />10/8/2020</Clock>
          <TaskButton $width={66} aria-label="Notifications"><NoticeIcon /></TaskButton>
          <ShowDesktop aria-label="Show desktop" />
        </Tray>
      </TaskBar>
    </>
  );
}
